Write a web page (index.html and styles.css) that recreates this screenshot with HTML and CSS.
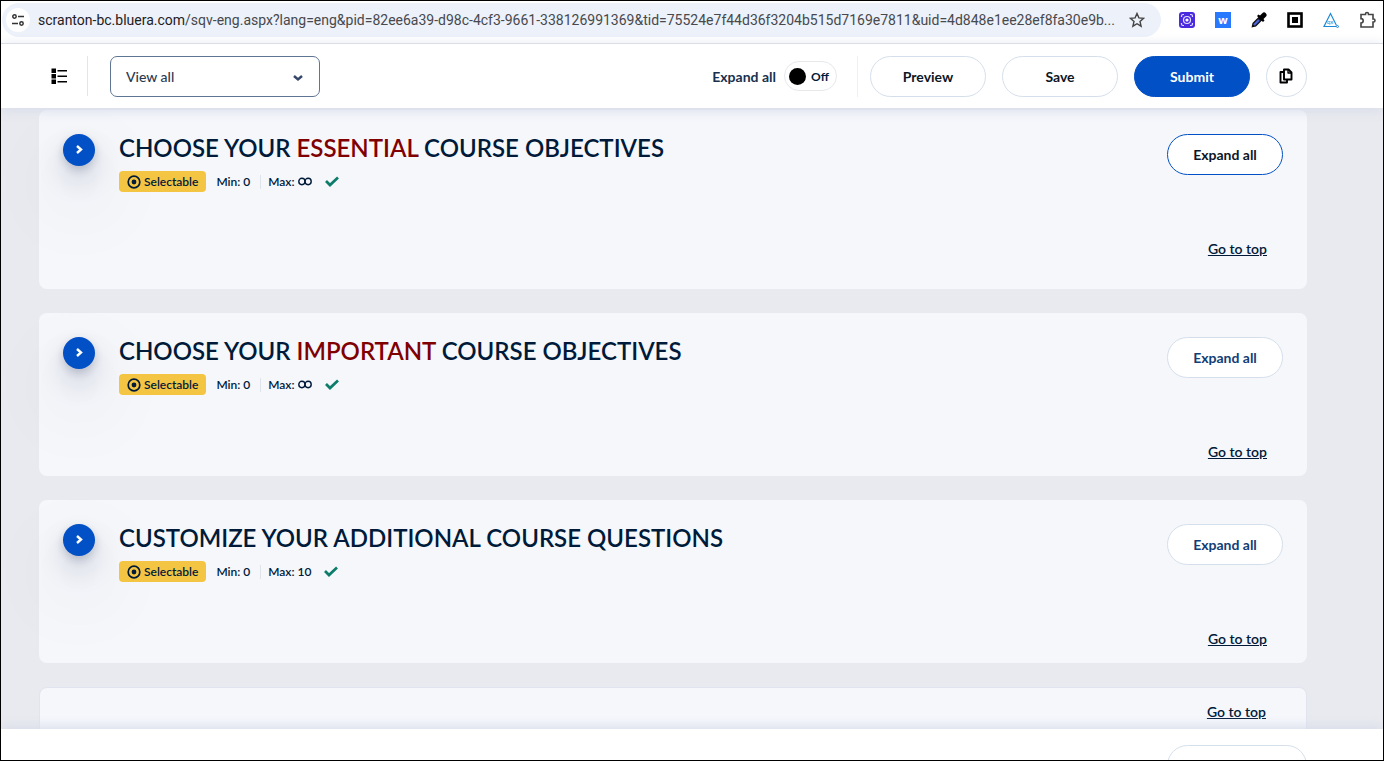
FILE: index.html
```html
<!DOCTYPE html>
<html lang="en">
<head>
<meta charset="utf-8">
<title>Question personalization</title>
<link rel="stylesheet" href="styles.css">
</head>
<body>
<svg class="sprite" aria-hidden="true">
  <symbol id="chevron" viewBox="0 0 12 12"><path d="M4 2l4 3.500-4 3.500" fill="none" stroke="currentColor" stroke-width="2.400"/></symbol>
  <symbol id="target" viewBox="0 0 14 14"><circle cx="7" cy="7" r="5.800" fill="none" stroke="currentColor" stroke-width="1.700"/><circle cx="7" cy="7" r="2.400" fill="currentColor"/></symbol>
  <symbol id="check" viewBox="0 0 16 12"><path d="M2 5l4 4L14 1.500" fill="none" stroke="currentColor" stroke-width="2.700"/></symbol>
  <symbol id="infinity" viewBox="0 0 14 9"><rect x=".8" y="1.300" width="6.200" height="6.400" rx="3.100" fill="none" stroke="currentColor" stroke-width="1.400"/><rect x="7" y="1.300" width="6.200" height="6.400" rx="3.100" fill="none" stroke="currentColor" stroke-width="1.400"/></symbol>
</svg>
<div class="window">
  <div class="browser-bar">
    <div class="address">
      <button class="site-info" aria-label="Site information"><svg width="14" height="14" viewBox="0 0 14 14" fill="none" stroke="#333" stroke-width="1.500"><circle cx="3.500" cy="3.500" r="1.700"/><path d="M7 3.500h6M1 10.500h6"/><circle cx="10.500" cy="10.500" r="1.700"/></svg></button>
      <div class="url"><span class="host">scranton-bc.bluera.com</span>/sqv-eng.aspx?lang=eng&amp;pid=82ee6a39-d98c-4cf3-9661-338126991369&amp;tid=75524e7f44d36f3204b515d7169e7811&amp;uid=4d848e1ee28ef8fa30e9b...</div>
      <button class="star" aria-label="Bookmark"><svg width="16" height="16" viewBox="0 0 16 16"><path d="M8 1.500l1.900 4.400 4.700.4-3.600 3.200 1.100 4.700L8 11.700l-4.100 2.500L5 9.500 1.400 6.300l4.700-.4z" fill="none" stroke="#444" stroke-width="1.400"/></svg></button>
    </div>
    <div class="extensions">
      <button aria-label="Capture"><svg width="16" height="16" viewBox="0 0 16 16"><rect width="16" height="16" rx="3" fill="#4b2be0"/><g fill="none" stroke="#e4dcff" stroke-width="1.200"><path d="M2.500 5V4Q2.500 2.500 4 2.500h1M11 2.500h1q1.500 0 1.500 1.500v1M13.500 11v1q0 1.500-1.500 1.500h-1M5 13.500H4Q2.500 13.500 2.500 12v-1"/><circle cx="8" cy="8" r="3.500"/></g><circle cx="8" cy="8" r="1.600" fill="#fff"/></svg></button>
      <button class="wave" aria-label="Wave">w</button>
      <button aria-label="Eyedropper"><svg width="16" height="16" viewBox="0 0 16 16"><path d="M.500 15.500l1-4.500 6.500-6.500 3.500 3.500L5 14.500z" fill="#111"/><path d="M3 13l5-5" stroke="#4c63d8" stroke-width="2.400"/><path d="M6 4l6 6 1.500-1.500-1-1.500 2.300-2.300a2.200 2.200 0 0 0-3.500-3.500L9 3.500 7.500 2.500z" fill="#000"/></svg></button>
      <button aria-label="Reader"><svg width="16" height="16" viewBox="0 0 16 16"><rect x="1.500" y="1.500" width="13" height="13" fill="#fff" stroke="#000" stroke-width="2.600"/><rect x="5" y="5" width="6" height="6"/></svg></button>
      <button aria-label="Accessibility"><svg width="16" height="16" viewBox="0 0 16 16" fill="none" stroke="#1d8ad8"><path d="M13 14.500H1L7.500 1.500l6 12" stroke-width="1.200"/><circle cx="14.500" cy="14.500" r="1"/><text x="4" y="12" class="qx">qx</text></svg></button>
      <button aria-label="Extensions"><svg width="18" height="18" viewBox="0 0 18 18"><path d="M2 3.500h4.500V3a1.500 1.500 0 0 1 3 0v.5H14V8h.5a1.500 1.500 0 0 1 0 3H14v5H2v-4a2.200 2.200 0 0 0 0-4.400z" fill="none" stroke="#444" stroke-width="1.600"/></svg></button>
    </div>
  </div>

  <header class="toolbar">
    <button class="menu" aria-label="Sections"><svg width="18" height="18" viewBox="0 0 18 18"><path d="M1.500 1.500h4.500v4.500H1.500zM1.500 7h4.500v4.500H1.500zM1.500 12.500h4.500V17H1.500zM7.500 3H17v1.500H7.500zM7.500 8.500H17V10H7.500zM7.500 14H17v1.500H7.500z"/></svg></button>
    <div class="select-wrap">
      <select class="view" aria-label="View"><option>View all</option></select>
      <svg class="caret" width="10" height="8" viewBox="0 0 10 8"><path d="M1 2l4 3.500L9 2" fill="none" stroke="#34466a" stroke-width="2.400"/></svg>
    </div>
    <div class="actions">
      <span class="expand-label" id="expand">Expand all</span>
      <button class="toggle" role="switch" aria-checked="false" aria-labelledby="expand"><span class="knob"></span>Off</button>
      <div class="buttons">
        <button class="pill">Preview</button>
        <button class="pill">Save</button>
        <button class="pill primary">Submit</button>
        <button class="pill round" aria-label="Copy"><svg width="16" height="16" viewBox="0 0 16 16" fill="none" stroke="#000" stroke-width="1.900" stroke-linejoin="round"><path d="M5 1.500h4.500L12.500 4.500v7H5z"/><path d="M9 1.500V5h3.500" stroke-width="1.300"/><path d="M5 4H1.500v10.500H8V12"/></svg></button>
      </div>
    </div>
  </header>

  <main class="content">
    <section class="card first">
      <button class="disclose" aria-label="Expand essential"><svg width="12" height="12"><use href="#chevron"/></svg></button>
      <div class="info">
        <h2>CHOOSE YOUR <em>ESSENTIAL</em> COURSE OBJECTIVES</h2>
        <div class="meta"><span class="badge"><svg width="14" height="14"><use href="#target"/></svg>Selectable</span><span class="min">Min: 0</span><span class="max">Max: <svg width="14" height="9"><use href="#infinity"/></svg></span><svg class="check" width="16" height="12"><use href="#check"/></svg></div>
      </div>
      <div class="side"><button class="pill focused">Expand all</button><a href="#top">Go to top</a></div>
    </section>
    <section class="card">
      <button class="disclose" aria-label="Expand important"><svg width="12" height="12"><use href="#chevron"/></svg></button>
      <div class="info">
        <h2>CHOOSE YOUR <em>IMPORTANT</em> COURSE OBJECTIVES</h2>
        <div class="meta"><span class="badge"><svg width="14" height="14"><use href="#target"/></svg>Selectable</span><span class="min">Min: 0</span><span class="max">Max: <svg width="14" height="9"><use href="#infinity"/></svg></span><svg class="check" width="16" height="12"><use href="#check"/></svg></div>
      </div>
      <div class="side"><button class="pill navy">Expand all</button><a href="#top">Go to top</a></div>
    </section>
    <section class="card">
      <button class="disclose" aria-label="Expand additional"><svg width="12" height="12"><use href="#chevron"/></svg></button>
      <div class="info">
        <h2>CUSTOMIZE YOUR ADDITIONAL COURSE QUESTIONS</h2>
        <div class="meta"><span class="badge"><svg width="14" height="14"><use href="#target"/></svg>Selectable</span><span class="min">Min: 0</span><span class="max">Max: 10</span><svg class="check" width="16" height="12"><use href="#check"/></svg></div>
      </div>
      <div class="side"><button class="pill navy">Expand all</button><a href="#top">Go to top</a></div>
    </section>
    <section class="card last"><div class="side"><a href="#top">Go to top</a></div></section>
  </main>
  <footer class="bottom-bar"><button class="pill wide" aria-label="Next"></button></footer>
</div>
</body>
</html>
```
FILE: styles.css
```css
* { box-sizing: border-box; }
body { margin: 0; font-family: Lato, sans-serif; color: #001a3a; }
button { font: inherit; color: inherit; background: none; border: 0; padding: 0; cursor: pointer; }
svg { display: block; flex: none; }
.sprite { position: absolute; width: 0; height: 0; }
.window { height: 100vh; overflow: hidden; display: flex; flex-direction: column; border: 1px solid #000; background: #e9eaef; }

.browser-bar { flex: none; display: flex; height: 43px; padding: 2px 6px 7px 1px; background: #fff; border-bottom: 1px solid #dcdfe2; }
.address { flex: 1; min-width: 0; display: flex; align-items: center; height: 34px; padding: 0 16px 0 4px; border-radius: 17px; background: #ecf1fa; }
.site-info { flex: none; width: 24px; height: 24px; border-radius: 50%; background: #fff; display: grid; place-items: center; }
.url { flex: 1; min-width: 0; margin-left: 8px; overflow: hidden; white-space: nowrap; font: 14px Roboto, sans-serif; color: #47494d; }
.host { color: #1f2023; }
.star { flex: none; }
.extensions { flex: none; display: flex; align-items: center; gap: 20px; margin-left: 18px; }
.wave { width: 16px; height: 16px; background: #2979ff; color: #fff; font: bold 11px/14px "Open Sans", sans-serif; }
.qx { font: 6px Lato, sans-serif; fill: #1d8ad8; stroke: none; }

.toolbar { position: relative; z-index: 1; flex: none; display: flex; align-items: center; height: 64px; padding: 0 76px 0 49px; background: #fff; box-shadow: 0 2px 12px #d6dbe9; }
.menu { display: grid; place-items: center; height: 40px; padding-right: 19px; border-right: 1px solid #e1e5ee; }
.select-wrap { position: relative; margin-left: 22px; }
.view { appearance: none; width: 210px; height: 41px; padding: 0 15px; border: 1px solid #5e7694; border-radius: 7px; background: #fff; color: #2b3950; font: 500 14px Lato, sans-serif; }
.caret { position: absolute; right: 17px; top: 18px; pointer-events: none; }
.actions { display: flex; align-items: center; margin-left: auto; font-size: 14px; font-weight: 700; }
.expand-label { color: #17304f; }
.toggle { display: flex; align-items: center; gap: 5px; height: 30px; width: 53px; margin-left: 8px; padding-left: 4px; border: 1px solid #e6e8ec; border-radius: 15px; font-size: 12px; }
.knob { width: 17px; height: 17px; border-radius: 50%; background: #000; }
.buttons { display: flex; gap: 16px; margin-left: 20px; padding-left: 12px; border-left: 1px solid #edf0f5; }
.pill { width: 116px; height: 41px; border: 1px solid #d5dfeb; border-radius: 21px; background: #fff; color: #0d1625; font-size: 14px; font-weight: 700; }
.primary { border-color: #0250c5; background: #0250c5; color: #fff; }
.round { width: 41px; display: grid; place-items: center; }
.focused { border-color: #0250c5; }
.navy { color: #123d75; }

.content { flex: 1; min-height: 0; overflow: hidden; display: flex; flex-direction: column; gap: 24px; padding: 2px 76px 0 38px; }
.card { flex: none; display: flex; align-items: flex-start; min-height: 163px; padding: 24px 24px 12px; border-radius: 8px; background: #f5f7fb; }
.first { min-height: 179px; }
.disclose { flex: none; width: 32px; height: 32px; border-radius: 50%; background: #0250c5; color: #fff; display: grid; place-items: center; box-shadow: 0 4px 8px #0a1c4030, 0 14px 28px #0a1c4028, 0 32px 80px 10px #0a1c4016; }
.info { flex: 1; margin-left: 24px; }
h2 { margin: 0; font-size: 24px; line-height: 28px; font-weight: 600; }
em { font-style: normal; color: #800000; }
.meta { display: flex; align-items: center; margin-top: 9px; font-size: 12px; line-height: 14px; font-weight: 600; }
.badge { display: flex; align-items: center; gap: 3px; height: 21px; padding: 0 8px; border-radius: 4px; background: #f4c542; }
.min { margin-left: 10px; padding-right: 10px; border-right: 1px solid #dfe3ea; }
.max { display: flex; align-items: center; gap: 3px; margin-left: 7px; }
.check { margin-left: 12px; color: #0d7c6b; }
.side { display: flex; flex-direction: column; align-items: flex-end; gap: 65px; }
.side a { margin-right: 16px; color: #001a3a; font-size: 14px; line-height: 17px; font-weight: 600; text-underline-offset: 1px; }
.last { justify-content: flex-end; padding-top: 15px; border: 1px solid #dfe4ef; }

.bottom-bar { position: relative; z-index: 1; flex: none; display: flex; justify-content: flex-end; height: 31px; padding: 16px 76px 0; overflow: visible; background: #fff; box-shadow: 0 -2px 12px #d6dbe9; }
.wide { width: 140px; flex: none; }
```
